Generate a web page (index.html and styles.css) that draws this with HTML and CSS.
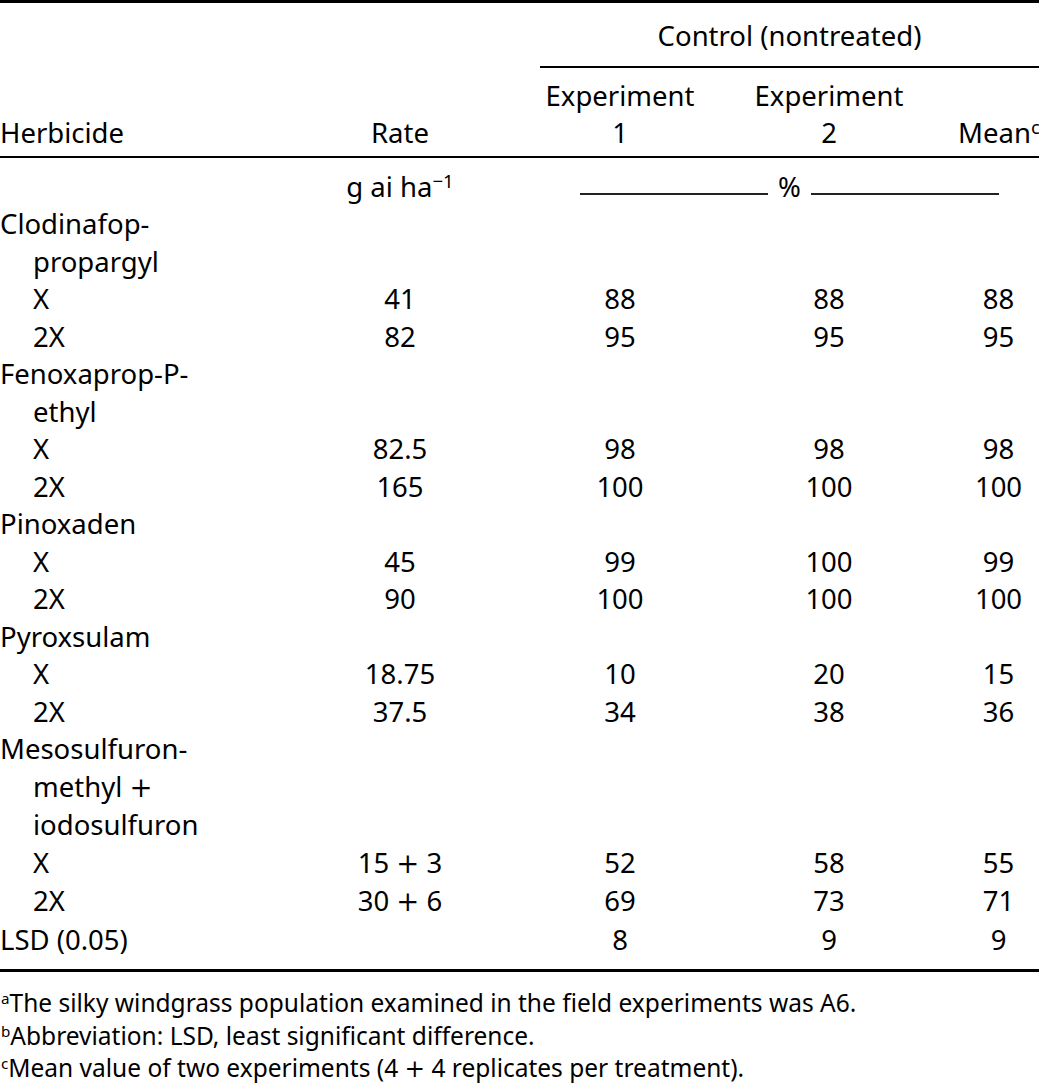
FILE: index.html
```html
<!DOCTYPE html>
<html lang="en">
<head>
<meta charset="utf-8">
<title>Herbicide control table</title>
<link rel="stylesheet" href="styles.css">
</head>
<body>
<div class="wrap">
<table class="data">
  <colgroup>
    <col class="c-herb">
    <col class="c-rate">
    <col class="c-e1">
    <col class="c-e2">
    <col class="c-mean">
  </colgroup>
  <thead>
    <tr class="h1">
      <th class="left bottom" rowspan="2">Herbicide</th>
      <th class="bottom" rowspan="2">Rate</th>
      <th class="group" colspan="3">Control (nontreated)</th>
    </tr>
    <tr class="h2">
      <th>Experiment<br>1</th>
      <th>Experiment<br>2</th>
      <th class="mean">Mean<sup>c</sup></th>
    </tr>
  </thead>
  <tbody>
    <tr class="first">
      <td></td>
      <td>g ai ha<sup>−1</sup></td>
      <td colspan="3" class="unit"><div class="rule"><span class="dash"></span><span class="pct">%</span><span class="dash"></span></div></td>
    </tr>
    <tr><td class="left name">Clodinafop-<br>propargyl</td><td></td><td></td><td></td><td></td></tr>
    <tr><td class="left sub">X</td><td>41</td><td>88</td><td>88</td><td>88</td></tr>
    <tr><td class="left sub">2X</td><td>82</td><td>95</td><td>95</td><td>95</td></tr>
    <tr><td class="left name">Fenoxaprop-P-<br>ethyl</td><td></td><td></td><td></td><td></td></tr>
    <tr><td class="left sub">X</td><td>82.5</td><td>98</td><td>98</td><td>98</td></tr>
    <tr><td class="left sub">2X</td><td>165</td><td>100</td><td>100</td><td>100</td></tr>
    <tr><td class="left name">Pinoxaden</td><td></td><td></td><td></td><td></td></tr>
    <tr><td class="left sub">X</td><td>45</td><td>99</td><td>100</td><td>99</td></tr>
    <tr><td class="left sub">2X</td><td>90</td><td>100</td><td>100</td><td>100</td></tr>
    <tr><td class="left name">Pyroxsulam</td><td></td><td></td><td></td><td></td></tr>
    <tr><td class="left sub">X</td><td>18.75</td><td>10</td><td>20</td><td>15</td></tr>
    <tr><td class="left sub">2X</td><td>37.5</td><td>34</td><td>38</td><td>36</td></tr>
    <tr><td class="left name">Mesosulfuron-<br>methyl <span class="op">+</span><br>iodosulfuron</td><td></td><td></td><td></td><td></td></tr>
    <tr><td class="left sub">X</td><td>15 <span class="op">+</span> 3</td><td>52</td><td>58</td><td>55</td></tr>
    <tr><td class="left sub">2X</td><td>30 <span class="op">+</span> 6</td><td>69</td><td>73</td><td>71</td></tr>
    <tr class="last"><td class="left name">LSD (0.05)</td><td></td><td>8</td><td>9</td><td>9</td></tr>
  </tbody>
</table>
<div class="notes">
  <p><sup>a</sup>The silky windgrass population examined in the field experiments was A6.</p>
  <p><sup>b</sup>Abbreviation: LSD, least significant difference.</p>
  <p><sup>c</sup>Mean value of two experiments (4 <span class="op">+</span> 4 replicates per treatment).</p>
</div>
</div>
</body>
</html>
```

FILE: styles.css
```css
html, body {
  margin: 0;
  padding: 0;
  background: #ffffff;
}

body {
  font-family: "Noto Sans", "Open Sans", sans-serif;
  color: #000000;
}

.wrap {
  width: 1039px;
}

.data {
  width: 1039px;
  table-layout: fixed;
  border-collapse: separate;
  border-spacing: 0;
  border-top: 3px solid #000;
  border-bottom: 3px solid #000;
  font-size: 27.5px;
  line-height: 37.5px;
}

.c-herb { width: 260px; }
.c-rate { width: 280px; }
.c-e1 { width: 160px; }
.c-e2 { width: 258px; }
.c-mean { width: 81px; }

th, td {
  padding: 0;
  font-weight: normal;
  text-align: center;
  vertical-align: top;
  white-space: nowrap;
}

.left {
  text-align: left;
}

th.bottom {
  vertical-align: bottom;
  padding-bottom: 4px;
  border-bottom: 2px solid #000;
}

.h1 th.group {
  padding-top: 14px;
  padding-bottom: 11px;
  border-bottom: 2px solid #000;
}

.h2 th {
  padding-top: 9px;
  padding-bottom: 4px;
  border-bottom: 2px solid #000;
}

.h2 th.mean {
  text-align: right;
  vertical-align: bottom;
  padding-right: 3px;
}

.first td {
  padding-top: 10px;
}

.last td {
  padding-bottom: 11px;
}

.name {
  padding-left: 33px;
  text-indent: -33px;
}

.sub {
  padding-left: 33px;
}

sup {
  font-size: 0.68em;
  line-height: 0;
  vertical-align: 0.5em;
}

.op {
  font-family: "DejaVu Serif", "Liberation Serif", serif;
  font-weight: 300;
}

.unit {
  padding-left: 40px;
  padding-right: 40px;
}

.rule {
  display: flex;
  align-items: center;
}

.dash {
  flex: 1;
  height: 2px;
  background: #222;
  margin-top: 15px;
}

.pct {
  margin: 0 10px;
}

.notes {
  margin-top: 15px;
  font-size: 24.5px;
  line-height: 32.5px;
}

.notes p {
  margin: 0;
  padding-left: 1px;
}

.notes sup {
  font-size: 0.62em;
  vertical-align: 0.55em;
}
```
